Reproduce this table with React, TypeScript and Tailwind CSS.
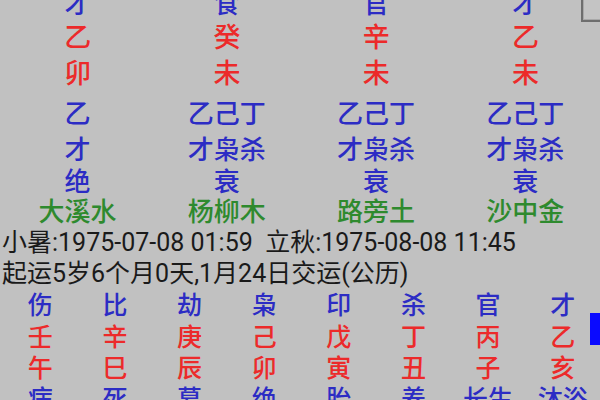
const FONT = "font-['Roboto','Noto_Sans_CJK_SC',sans-serif]";

const topRows: { h: string; color: string; size: string; cells: string[] }[] = [
  { h: 'h-[34px] -mt-[13px]', color: 'text-[#2c2cc4]', size: 'text-[26px]', cells: ['才', '食', '官', '才'] },
  { h: 'h-[34px]', color: 'text-[#ec2a2a]', size: 'text-[27px]', cells: ['乙', '癸', '辛', '乙'] },
  { h: 'h-[39px]', color: 'text-[#ec2a2a]', size: 'text-[27px]', cells: ['卯', '未', '未', '未'] },
  { h: 'h-[39px]', color: 'text-[#2c2cc4]', size: 'text-[26px]', cells: ['乙', '乙己丁', '乙己丁', '乙己丁'] },
  { h: 'h-[34px]', color: 'text-[#2c2cc4]', size: 'text-[26px]', cells: ['才', '才枭杀', '才枭杀', '才枭杀'] },
  { h: 'h-[30px]', color: 'text-[#2c2cc4]', size: 'text-[26px]', cells: ['绝', '衰', '衰', '衰'] },
  { h: 'h-[30px]', color: 'text-[#2e8a2e]', size: 'text-[26px]', cells: ['大溪水', '杨柳木', '路旁土', '沙中金'] },
];

const bottomRows: { h: string; color: string; cells: string[] }[] = [
  { h: 'h-[33px]', color: 'text-[#2c2cc4]', cells: ['伤', '比', '劫', '枭', '印', '杀', '官', '才'] },
  { h: 'h-[31px]', color: 'text-[#ec2a2a]', cells: ['壬', '辛', '庚', '己', '戊', '丁', '丙', '乙'] },
  { h: 'h-[30px]', color: 'text-[#ec2a2a]', cells: ['午', '巳', '辰', '卯', '寅', '丑', '子', '亥'] },
  { h: 'h-[32px]', color: 'text-[#2c2cc4]', cells: ['病', '死', '墓', '绝', '胎', '养', '长生', '沐浴'] },
];

export default function App() {
  return (
    <div className={`relative w-[600px] h-[400px] overflow-hidden bg-[#c1c1c1] font-medium ${FONT}`}>
      <div className="pl-[3px]">
        {/* Four pillars */}
        {topRows.map((row, i) => (
          <div key={i} className={`flex items-center ${row.h} ${row.color} ${row.size} leading-none`}>
            {row.cells.map((c, j) => (
              <div key={j} className="w-[150px] text-center whitespace-nowrap">{c}</div>
            ))}
          </div>
        ))}

        {/* Info lines */}
        <div className="h-[31px] flex items-center text-[25px] font-normal leading-none text-[#1a1a1a] whitespace-pre -ml-[1px]">
          小暑:1975-07-08 01:59  立秋:1975-08-08 11:45
        </div>
        <div className="h-[31px] flex items-center text-[25px] font-normal leading-none text-[#1a1a1a] whitespace-pre -ml-[1px]">
          起运5岁6个月0天,1月24日交运(公历)
        </div>

        {/* Luck pillars */}
        {bottomRows.map((row, i) => (
          <div key={i} className={`flex items-center ${row.h} ${row.color} text-[25px] leading-none`}>
            {row.cells.map((c, j) => (
              <div key={j} className="w-[75px] text-center whitespace-nowrap">{c}</div>
            ))}
          </div>
        ))}
      </div>

      {/* corner box */}
      <div className="absolute right-0 top-0 w-[19px] h-[22px] border-l-2 border-b-2 border-[#6e6e6e]">
        <div className="w-full h-full border-l border-b border-[#a8a8a8] bg-[#c4c4c4]" />
      </div>

      {/* scroll marker */}
      <div className="absolute right-0 top-[313px] w-[10px] h-[32px] bg-[#0a0aff]" />
    </div>
  );
}
